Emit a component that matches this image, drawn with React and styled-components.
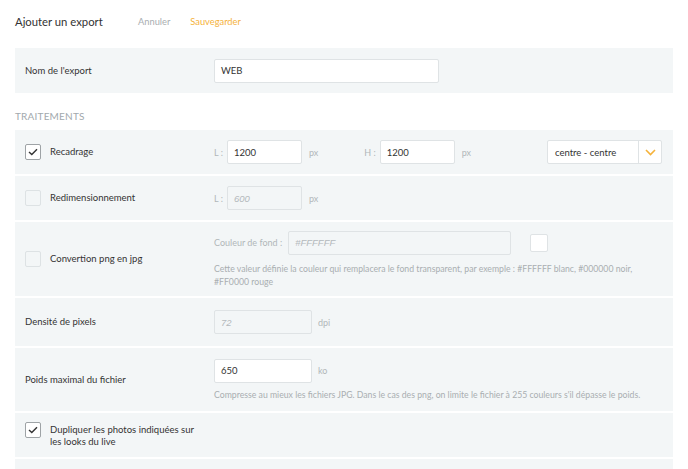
import React from 'react'
import styled, { createGlobalStyle } from 'styled-components'

const Global = createGlobalStyle`
  html, body { margin: 0; padding: 0; background: #fff; }
  body { font-family: Lato, "Open Sans", sans-serif; color: #333; }
`

const Page = styled.div`
  padding: 0 15px;
  width: 658px;
`

const Header = styled.div`
  display: flex;
  align-items: center;
  height: 42px;
  margin-bottom: 6px;
`

const Title = styled.div`
  font-size: 11.3px;
  color: #333;
  width: 123px;
`

const HeaderLink = styled.span`
  font-size: 9.3px;
  color: ${p => (p.primary ? '#f5b23a' : '#a9aeb1')};
  margin-right: 20px;
`

const Section = styled.div`
  font-size: 10px;
  letter-spacing: 0.2px;
  color: #a2a9ad;
  text-transform: uppercase;
  padding: 17px 0 8px;
`

const List = styled.div`
  display: flex;
  flex-direction: column;
  gap: 2px;
`

const Row = styled.div`
  display: grid;
  grid-template-columns: 189px 1fr;
  align-items: ${p => (p.top ? 'start' : 'center')};
  min-height: ${p => p.h}px;
  padding: ${p => (p.top ? '9px' : '0')} 11px 0 10px;
  box-sizing: border-box;
  background: #f3f6f7;
`

const Label = styled.div`
  display: flex;
  align-items: ${p => (p.multi ? 'flex-start' : 'center')};
  gap: 9px;
  font-size: 9.5px;
  line-height: 12px;
  color: #333;
`

const LabelText = styled.span`
  max-width: 150px;
  padding-top: ${p => (p.multi ? '2px' : '0')};
`

const Check = styled.span`
  flex: none;
  width: 14px;
  height: 14px;
  border: 1px solid ${p => (p.on ? '#9ea3a6' : '#dde2e4')};
  border-radius: 2px;
  background: ${p => (p.on ? '#fff' : '#f3f6f7')};
  display: flex;
  align-items: center;
  justify-content: center;
`

const Controls = styled.div`
  display: flex;
  flex-direction: column;
`

const Line = styled.div`
  display: flex;
  align-items: center;
`

const Small = styled.span`
  font-size: 9px;
  color: #b1b6b9;
  margin: ${p => p.m || '0'};
`

const Input = styled.div`
  box-sizing: border-box;
  width: ${p => p.w}px;
  height: 24px;
  border: 1px solid #dfe3e5;
  border-radius: 2px;
  background: ${p => (p.off ? 'transparent' : '#fff')};
  padding: 0 6px;
  display: flex;
  align-items: center;
  font-size: 9.5px;
  color: ${p => (p.off ? '#b4b9bc' : '#333')};
  font-style: ${p => (p.off ? 'italic' : 'normal')};
  font-family: ${p => (p.off ? '"Liberation Sans", Arial, sans-serif' : 'inherit')};
`

const Select = styled.div`
  margin-left: auto;
  box-sizing: border-box;
  width: 115px;
  height: 24px;
  border: 1px solid #dfe3e5;
  border-radius: 2px;
  background: #fff;
  display: flex;
  font-size: 9.5px;
`

const SelectText = styled.div`
  flex: 1;
  display: flex;
  align-items: center;
  padding-left: 7px;
`

const SelectArrow = styled.div`
  width: 22px;
  border-left: 1px solid #dfe3e5;
  display: flex;
  align-items: center;
  justify-content: center;
`

const Swatch = styled.span`
  width: 16px;
  height: 16px;
  border: 1px solid #dfe3e5;
  border-radius: 2px;
  background: #fff;
  margin-left: 19px;
`

const Help = styled.div`
  max-width: ${p => (p.wide ? 'none' : '432px')};
  font-size: 8.7px;
  line-height: 13px;
  color: #a9aeb1;
  margin-top: ${p => p.mt || 7}px;
`

const Tick = () => (
  <svg width="10" height="8" viewBox="0 0 10 8">
    <path d="M1 4 L3.8 6.6 L9 1.2" fill="none" stroke="#333" strokeWidth="1.4" />
  </svg>
)

const Chevron = () => (
  <svg width="11" height="7" viewBox="0 0 11 7">
    <path d="M1 1 L5.5 5.5 L10 1" fill="none" stroke="#f5b23a" strokeWidth="1.6" />
  </svg>
)

const CheckLabel = ({ on, children, multi }) => (
  <Label multi={multi}>
    <Check on={on}>{on && <Tick />}</Check>
    <LabelText multi={multi}>{children}</LabelText>
  </Label>
)

export default function App() {
  return (
    <Page>
      <Global />
      <Header>
        <Title>Ajouter un export</Title>
        <HeaderLink>Annuler</HeaderLink>
        <HeaderLink primary>Sauvegarder</HeaderLink>
      </Header>

      <Row h={45}>
        <Label>Nom de l'export</Label>
        <Line>
          <Input w={225}>WEB</Input>
        </Line>
      </Row>

      <Section>Traitements</Section>

      <List>
        <Row h={44}>
          <CheckLabel on>Recadrage</CheckLabel>
          <Line>
            <Small m="0 4px 0 0">L :</Small>
            <Input w={75}>1200</Input>
            <Small m="0 0 0 7px">px</Small>
            <Small m="0 4px 0 46px">H :</Small>
            <Input w={75}>1200</Input>
            <Small m="0 0 0 7px">px</Small>
            <Select>
              <SelectText>centre - centre</SelectText>
              <SelectArrow><Chevron /></SelectArrow>
            </Select>
          </Line>
        </Row>

        <Row h={44}>
          <CheckLabel>Redimensionnement</CheckLabel>
          <Line>
            <Small m="0 4px 0 0">L :</Small>
            <Input w={75} off>600</Input>
            <Small m="0 0 0 7px">px</Small>
          </Line>
        </Row>

        <Row h={74}>
          <CheckLabel>Convertion png en jpg</CheckLabel>
          <Controls>
            <Line>
              <Small m="0 6px 0 0">Couleur de fond :</Small>
              <Input w={223} off>#FFFFFF</Input>
              <Swatch />
            </Line>
            <Help>
              Cette valeur définie la couleur qui remplacera le fond transparent, par exemple : #FFFFFF blanc, #000000 noir, #FF0000 rouge
            </Help>
          </Controls>
        </Row>

        <Row h={48}>
          <Label>Densité de pixels</Label>
          <Line>
            <Input w={98} off>72</Input>
            <Small m="0 0 0 6px">dpi</Small>
          </Line>
        </Row>

        <Row h={63}>
          <Label>Poids maximal du fichier</Label>
          <Controls>
            <Line>
              <Input w={98}>650</Input>
              <Small m="0 0 0 6px">ko</Small>
            </Line>
            <Help mt={5} wide>
              Compresse au mieux les fichiers JPG. Dans le cas des png, on limite le fichier à 255 couleurs s'il dépasse le poids.
            </Help>
          </Controls>
        </Row>

        <Row h={44} top>
          <CheckLabel on multi>Dupliquer les photos indiquées sur les looks du live</CheckLabel>
        </Row>

        <Row h={44} />
      </List>
    </Page>
  )
}
